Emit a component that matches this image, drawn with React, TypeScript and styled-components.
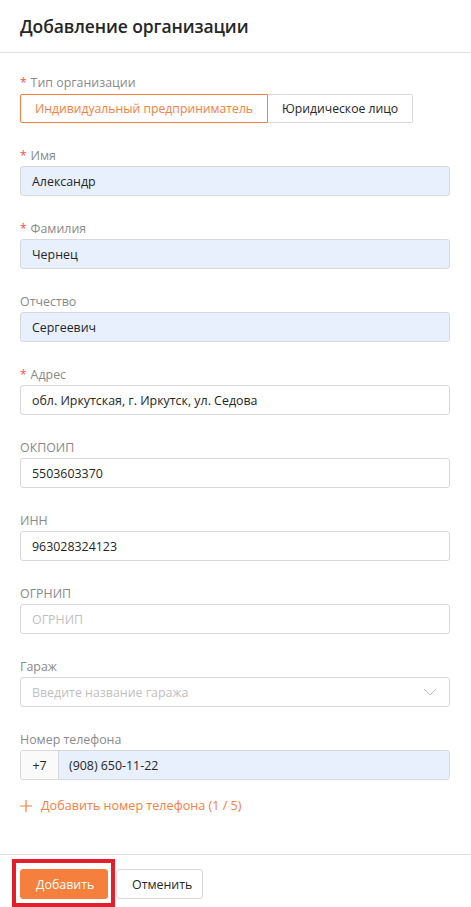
import React from 'react';
import styled, { createGlobalStyle } from 'styled-components';

const GlobalStyle = createGlobalStyle`
    html, body {
        margin: 0;
        padding: 0;
        background: #ffffff;
    }
    body {
        font-family: 'Open Sans', 'Noto Sans', Arial, sans-serif;
        color: #262626;
    }
    * {
        box-sizing: border-box;
    }
`;

type FieldData = {
    label: string;
    required?: boolean;
    value?: string;
    placeholder?: string;
    filled?: boolean;
};

const fields: FieldData[] = [
    { label: 'Имя', required: true, value: 'Александр', filled: true },
    { label: 'Фамилия', required: true, value: 'Чернец', filled: true },
    { label: 'Отчество', value: 'Сергеевич', filled: true },
    { label: 'Адрес', required: true, value: 'обл. Иркутская, г. Иркутск, ул. Седова' },
    { label: 'ОКПОИП', value: '5503603370' },
    { label: 'ИНН', value: '963028324123' },
    { label: 'ОГРНИП', placeholder: 'ОГРНИП' },
];

export default function App() {
    return (
        <Page>
            <GlobalStyle />
            <Header>
                <Title>Добавление организации</Title>
            </Header>
            <Body>
                <Field>
                    <Label>
                        <Star>*</Star>Тип организации
                    </Label>
                    <Segmented>
                        <Segment active>Индивидуальный предприниматель</Segment>
                        <Segment>Юридическое лицо</Segment>
                    </Segmented>
                </Field>

                {fields.map((f) => (
                    <Field key={f.label}>
                        <Label>
                            {f.required && <Star>*</Star>}
                            {f.label}
                        </Label>
                        <Input filled={f.filled}>
                            {f.value ? f.value : <Placeholder>{f.placeholder}</Placeholder>}
                        </Input>
                    </Field>
                ))}

                <Field>
                    <Label>Гараж</Label>
                    <Input>
                        <Placeholder>Введите название гаража</Placeholder>
                        <Caret width="14" height="8" viewBox="0 0 14 8">
                            <path d="M1 1 L7 7 L13 1" fill="none" stroke="#bfbfbf" strokeWidth="1" />
                        </Caret>
                    </Input>
                </Field>

                <Field>
                    <Label>Номер телефона</Label>
                    <PhoneGroup>
                        <PhonePrefix>+7</PhonePrefix>
                        <PhoneInput>(908) 650-11-22</PhoneInput>
                    </PhoneGroup>
                </Field>

                <AddPhone>
                    <svg width="12" height="12" viewBox="0 0 12 12">
                        <path d="M6 0 V12 M0 6 H12" stroke="#f5803e" strokeWidth="1.2" />
                    </svg>
                    Добавить номер телефона (1 / 5)
                </AddPhone>
            </Body>
            <Footer>
                <PrimaryButton>Добавить</PrimaryButton>
                <DefaultButton>Отменить</DefaultButton>
            </Footer>
        </Page>
    );
}

const Page = styled.div`
    width: 471px;
    min-height: 907px;
    display: flex;
    flex-direction: column;
    background: #fff;
`;

const Header = styled.div`
    height: 53px;
    padding: 0 20px;
    display: flex;
    align-items: center;
    border-bottom: 1px solid #e0e0e0;
`;

const Title = styled.h1`
    margin: 0;
    font-size: 17.5px;
    font-weight: 600;
    color: #262626;
    letter-spacing: -0.1px;
`;

const Body = styled.div`
    padding: 20px 21px 0 20px;
    display: flex;
    flex-direction: column;
    gap: 23px;
`;

const Field = styled.div`
    display: flex;
    flex-direction: column;
`;

const Label = styled.div`
    height: 20px;
    line-height: 20px;
    font-size: 12.4px;
    color: #8a8a8a;
`;

const Star = styled.span`
    color: #ff4d4f;
    margin-right: 4px;
    font-size: 12px;
`;

const Segmented = styled.div`
    display: flex;
    margin-top: 1px;
`;

const Segment = styled.div<{ active?: boolean }>`
    height: 29px;
    padding: 0 14px;
    display: flex;
    align-items: center;
    font-size: 12.2px;
    border: 1px solid ${(p) => (p.active ? '#f5803e' : '#d9d9d9')};
    color: ${(p) => (p.active ? '#f5803e' : '#262626')};
    &:first-child {
        border-radius: 2px 0 0 2px;
    }
    &:last-child {
        border-left: none;
        border-radius: 0 2px 2px 0;
    }
`;

const Input = styled.div<{ filled?: boolean }>`
    height: 30px;
    padding: 0 11px;
    display: flex;
    align-items: center;
    justify-content: space-between;
    font-size: 12.4px;
    color: #262626;
    background: ${(p) => (p.filled ? '#e8f0fe' : '#fff')};
    border: 1px solid #d9d9d9;
    border-radius: 3px;
`;

const Placeholder = styled.span`
    color: #bfbfbf;
`;

const Caret = styled.svg`
    margin-right: 1px;
`;

const PhoneGroup = styled.div`
    display: flex;
    height: 30px;
    border: 1px solid #d9d9d9;
    border-radius: 3px;
    overflow: hidden;
`;

const PhonePrefix = styled.div`
    width: 38px;
    display: flex;
    align-items: center;
    justify-content: center;
    background: #fafafa;
    border-right: 1px solid #d9d9d9;
    font-size: 12.4px;
`;

const PhoneInput = styled.div`
    flex: 1;
    display: flex;
    align-items: center;
    padding: 0 10px;
    background: #e8f0fe;
    font-size: 12.4px;
`;

const AddPhone = styled.div`
    display: flex;
    align-items: center;
    gap: 9px;
    margin-top: -6px;
    font-size: 12.6px;
    color: #f5803e;
    cursor: pointer;
`;

const Footer = styled.div`
    margin-top: auto;
    border-top: 1px solid #e0e0e0;
    padding: 14px 20px 8px;
    display: flex;
    gap: 8px;
`;

const Button = styled.button`
    height: 30px;
    padding: 0 15px;
    font-family: 'Open Sans', 'Noto Sans', Arial, sans-serif;
    font-size: 12.4px;
    border-radius: 3px;
    cursor: pointer;
`;

const PrimaryButton = styled(Button)`
    position: relative;
    background: #f5803e;
    border: 1px solid #f5803e;
    color: #fff;
    width: 88px;
    &::after {
        content: '';
        position: absolute;
        top: -11px;
        left: -9px;
        right: -8px;
        bottom: -9px;
        border: 4px solid #e61e2b;
        pointer-events: none;
    }
`;

const DefaultButton = styled(Button)`
    background: #fff;
    border: 1px solid #d9d9d9;
    color: #262626;
    width: 87px;
`;
